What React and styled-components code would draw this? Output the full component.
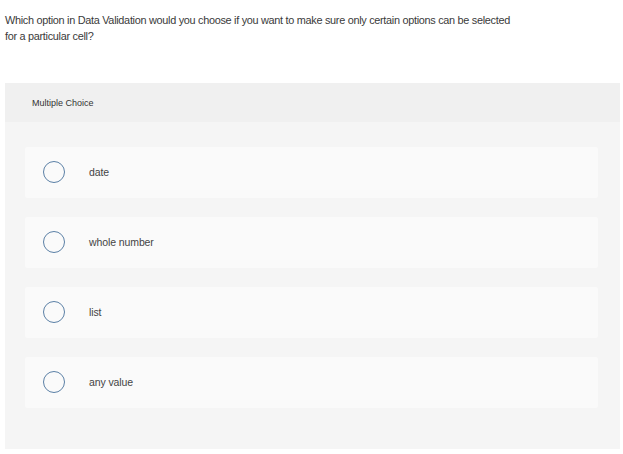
import React from "react";
import styled, { createGlobalStyle } from "styled-components";

const GlobalStyle = createGlobalStyle`
  html, body {
    margin: 0;
    padding: 0;
    background: #ffffff;
  }
  body {
    font-family: "Liberation Sans", Arial, sans-serif;
    color: #333333;
  }
`;

const options = ["date", "whole number", "list", "any value"];

const App = () => {
  return (
    <Page>
      <GlobalStyle />
      <Question>
        Which option in Data Validation would you choose if you want to make sure only certain options can be selected
        for a particular cell?
      </Question>
      <Panel>
        <PanelHeader>Multiple Choice</PanelHeader>
        <OptionList>
          {options.map((label) => (
            <Option key={label}>
              <Radio />
              <OptionLabel>{label}</OptionLabel>
            </Option>
          ))}
        </OptionList>
      </Panel>
    </Page>
  );
};

const Page = styled.div`
  width: 623px;
  height: 454px;
  padding: 12px 4px 0 5px;
  box-sizing: border-box;
`;

const Question = styled.p`
  margin: 0;
  font-size: 10.9px;
  letter-spacing: -0.3px;
  line-height: 16px;
  color: #3a3a3a;
  width: 512px;
`;

const Panel = styled.div`
  margin-top: 39px;
  width: 615px;
  height: 366px;
  background: #f5f5f5;
`;

const PanelHeader = styled.div`
  height: 39px;
  background: #f0f0f0;
  display: flex;
  align-items: center;
  padding-left: 27px;
  font-size: 9px;
  color: #333;
`;

const OptionList = styled.div`
  display: flex;
  flex-direction: column;
  gap: 19px;
  padding: 25px 0 0 20px;
`;

const Option = styled.div`
  width: 573px;
  height: 51px;
  background: #fafafa;
  border-radius: 2px;
  display: flex;
  align-items: center;
  padding-left: 18px;
  box-sizing: border-box;
`;

const Radio = styled.span`
  width: 22px;
  height: 22px;
  margin-top: -1px;
  border-radius: 50%;
  border: 1.5px solid #5b80a6;
  box-sizing: border-box;
  flex-shrink: 0;
`;

const OptionLabel = styled.span`
  margin-left: 24px;
  margin-top: -2px;
  font-size: 10.5px;
  letter-spacing: -0.1px;
  color: #444;
`;

export default App;
